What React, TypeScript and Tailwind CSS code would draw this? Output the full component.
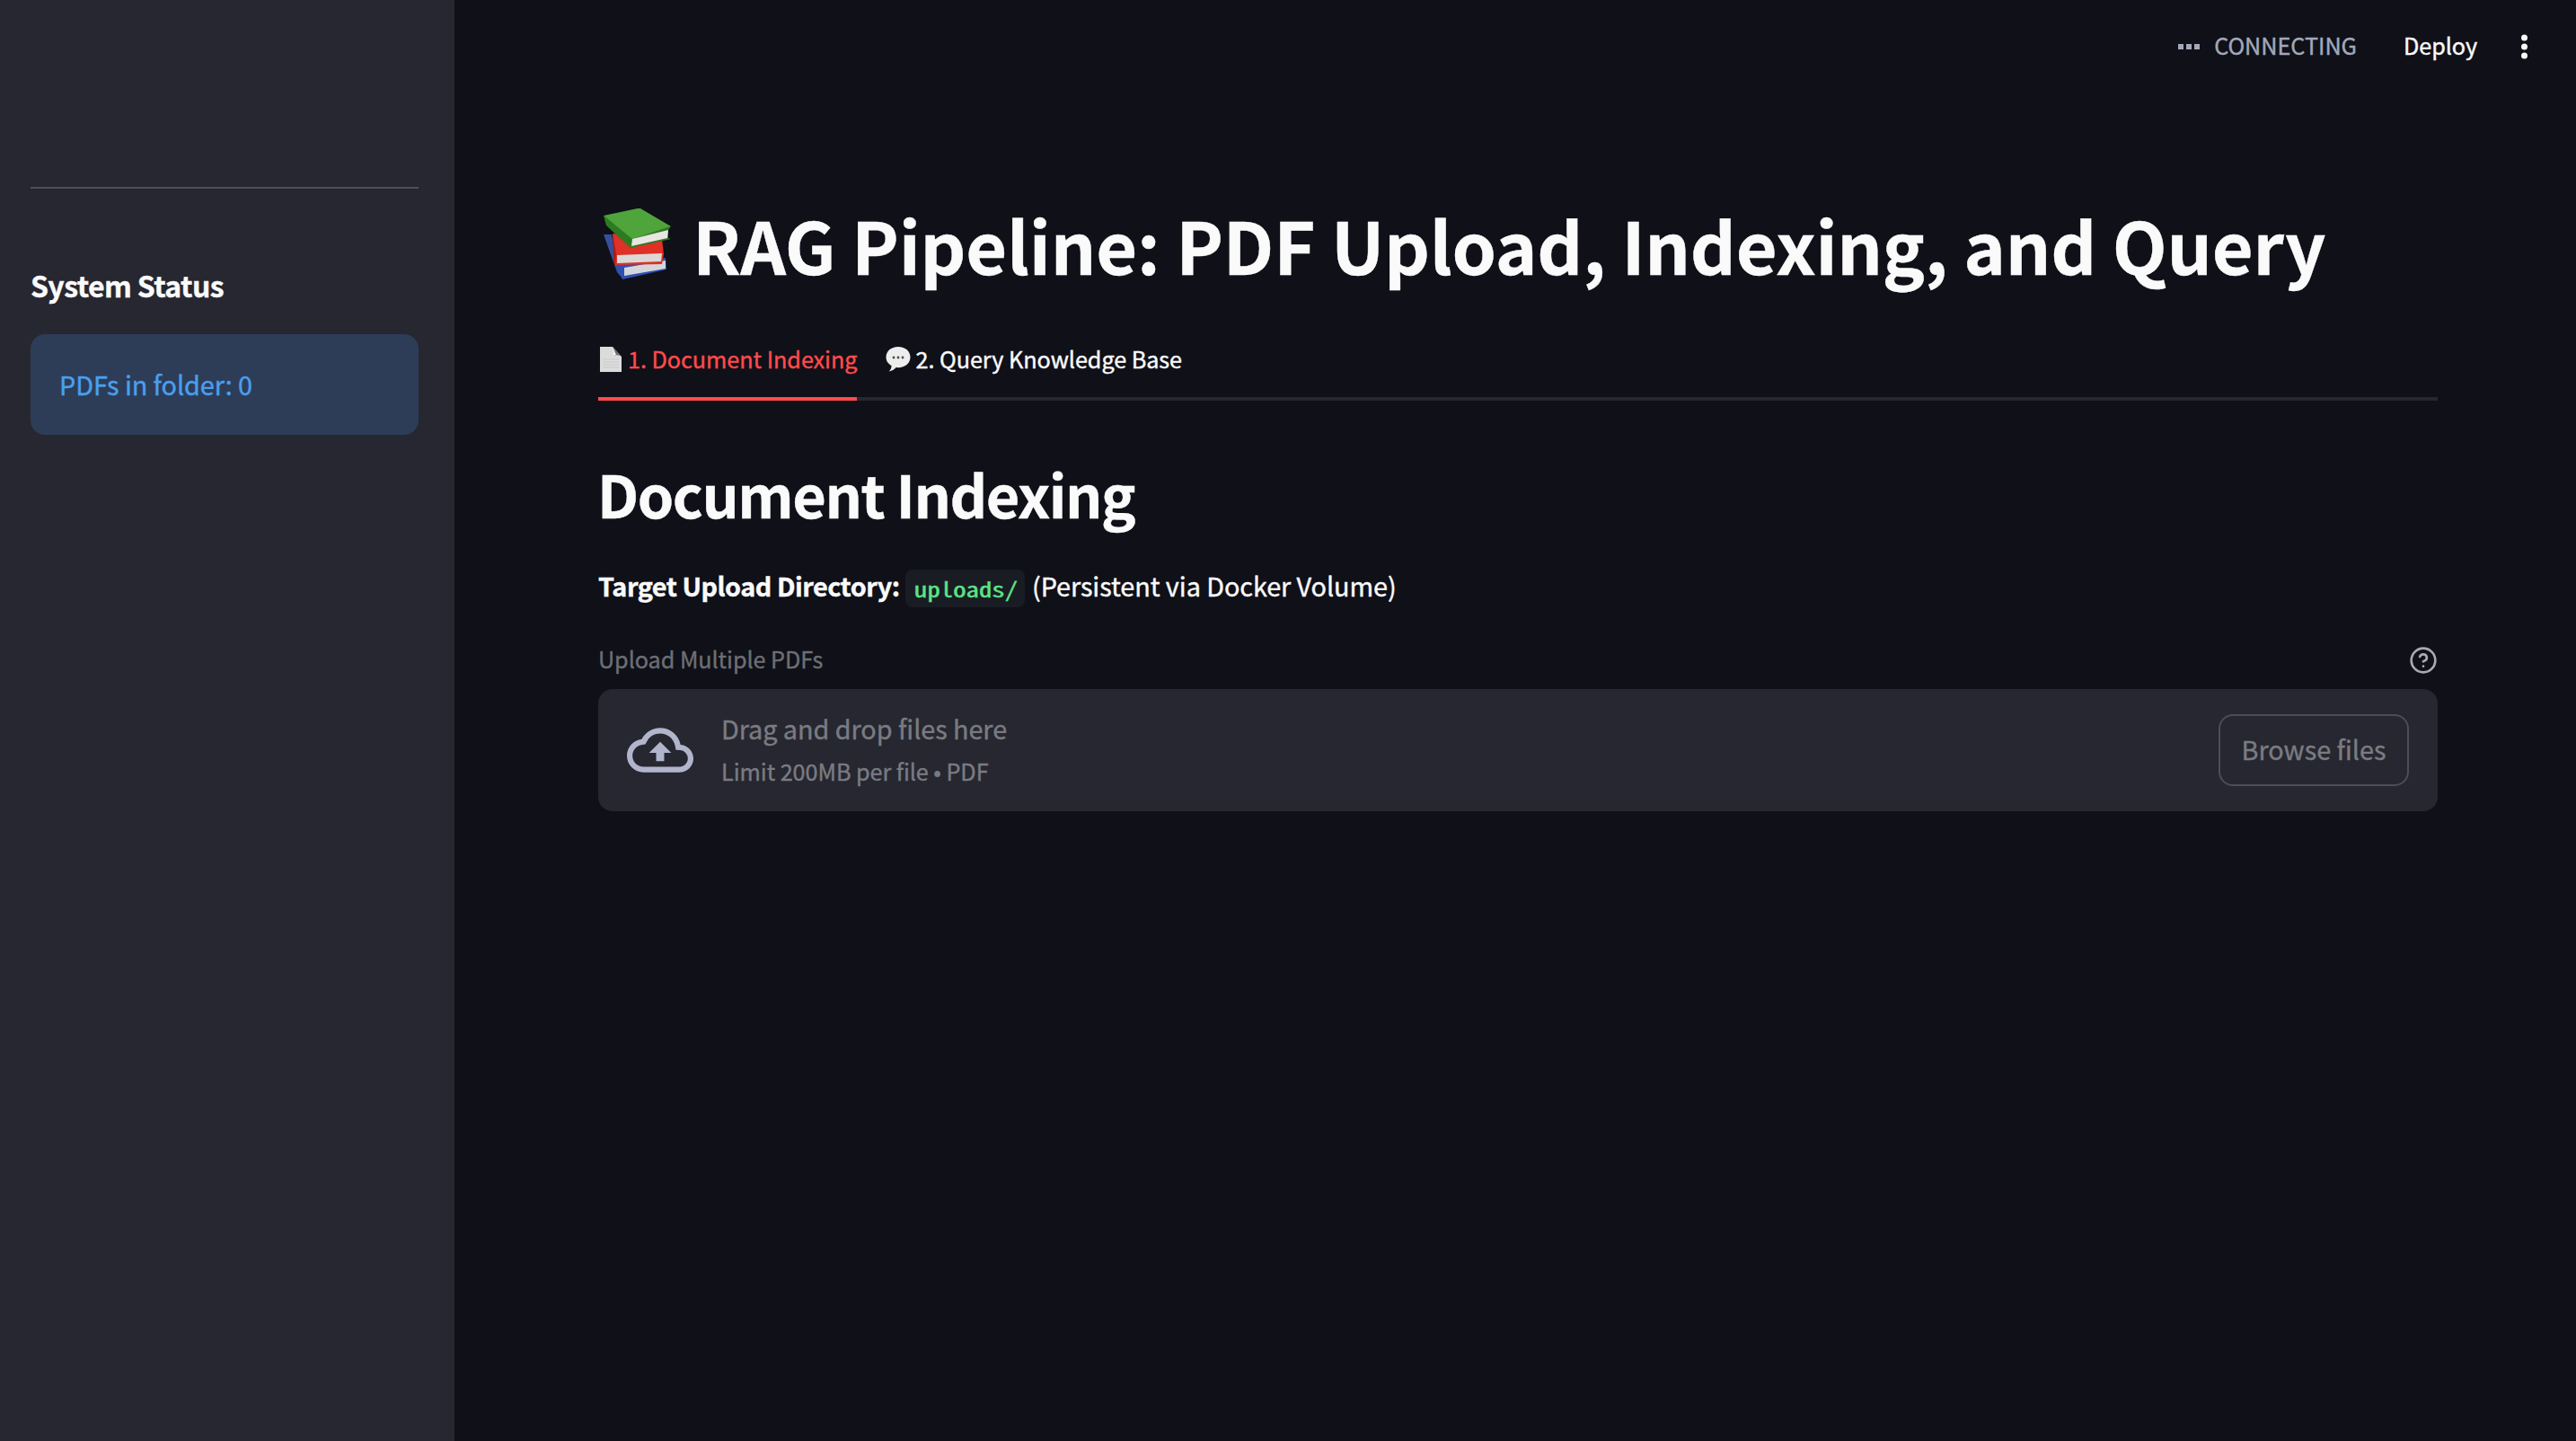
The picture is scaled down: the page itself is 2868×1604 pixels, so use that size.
import type { ReactNode } from 'react';

const sans = "font-['Noto_Sans_CJK_JP','Noto_Sans_CJK_SC',sans-serif]";

function BooksIcon() {
  return (
    <svg width="76" height="80" viewBox="0 0 76 80" className="shrink-0">
      {/* blue book */}
      <path d="M0 29h9l6 34 6 15L15 71z" fill="#35509f" />
      <path d="M13 62l56-7 1 13-49 11z" fill="#2f4fb4" />
      <path d="M23 66l46-8v9l-46 8z" fill="#d4d6da" />
      {/* red book */}
      <path d="M10 28l55 6 2 17-2 11-52 1z" fill="#df3126" />
      <path d="M10 28l4 23-1 12-2-3z" fill="#a51d1a" />
      <path d="M15 52l50-2-1 9-49 2z" fill="#dcd8d6" />
      {/* green book */}
      <path d="M0 8l32 25 43-13-3 4v9l3 1-45 10L3 19z" fill="#2d7a22" />
      <path d="M0 8l38-8h3l34 20-43 14z" fill="#4fa53c" />
      <path d="M32 34l40-10-1 9-40 9z" fill="#e8e6e2" />
    </svg>
  );
}

function PageIcon() {
  return (
    <svg width="24" height="28" viewBox="0 0 24 28" className="mr-[7px] ml-0.5 shrink-0">
      <path d="M0 0h14l10 11v17H0z" fill="#dcdcdc" />
      <path d="M3 14h18M3 17h18M3 20h18M3 23h18" stroke="#cbcbcb" strokeWidth="1" />
      <path d="M14 0l10 11c-3-2-6-2-8-1 0-4 0-7-2-10z" fill="#6f6f6f" />
      <path d="M14 0c1 3 1 6 1 10l3-1z" fill="#f4f4f4" />
    </svg>
  );
}

function SpeechIcon() {
  return (
    <svg width="28" height="28" viewBox="0 0 28 28" className="mr-[5px] shrink-0">
      <path d="M14 0C6 0 .5 5 .5 11.500c0 4.500 2.500 7.500 6 9.500 0 3-1 5-3 6.500 4-.5 6.500-2.500 8-4.500 9 1 16-4 16-11.500C27.500 5 22 0 14 0z" fill="#ededed" />
      <circle cx="9" cy="12" r="1.4" fill="#4a4a4a" />
      <circle cx="14" cy="12" r="1.4" fill="#4a4a4a" />
      <circle cx="19" cy="12" r="1.4" fill="#4a4a4a" />
    </svg>
  );
}

function Sidebar() {
  return (
    <aside className="w-[506px] shrink-0 bg-[#262730] pr-10 pl-[34px]">
      <hr className="mt-[208px] border-t-2 border-[#4d4e56]" />
      <h3 className="mt-[86px] text-[32px] leading-[42px] font-semibold tracking-[-0.6px]">System Status</h3>
      <div className="mt-[34px] flex h-28 items-center rounded-2xl bg-[#2d3d58] px-8 text-[28.8px] leading-[48px] tracking-[-0.07px] text-[#4a9fee]">
        PDFs in folder: 0
      </div>
    </aside>
  );
}

function Header() {
  return (
    <header className="flex h-[104px] items-center justify-end pr-[54px] text-[25.2px]">
      <div className="mr-4 flex gap-[3px]">
        <span className="size-1.5 bg-[#a3a8b8]" />
        <span className="size-1.5 bg-[#a3a8b8]" />
        <span className="size-1.5 bg-[#a3a8b8]" />
      </div>
      <span className="mr-[52px] pb-[3px] text-[#a3a8b8]">CONNECTING</span>
      <span className="mr-[49px] pb-[3px] tracking-[-0.05px]">Deploy</span>
      <svg width="7" height="28" viewBox="0 0 7 28" fill="#fafafa">
        <circle cx="3.5" cy="4" r="3.5" />
        <circle cx="3.5" cy="14" r="3.5" />
        <circle cx="3.5" cy="24" r="3.5" />
      </svg>
    </header>
  );
}

function Tab({ active, icon, children }: { active?: boolean; icon: ReactNode; children: ReactNode }) {
  return (
    <div
      className={
        active
          ? '-mb-1 flex h-20 items-center border-b-4 border-[#ff4b4b] pb-2 text-[#ff4b4b]'
          : '-mb-1 flex h-20 items-center border-b-4 border-transparent pb-2'
      }
    >
      {icon}
      <span>{children}</span>
    </div>
  );
}

function Uploader() {
  return (
    <section>
      <div className="mt-9 flex h-10 items-center justify-between text-[25.2px]">
        <span className="pt-0.5 tracking-[-0.05px] text-[#6d6e74]">Upload Multiple PDFs</span>
        <svg
          width="32"
          height="32"
          viewBox="0 0 24 24"
          fill="none"
          stroke="#a9aaae"
          strokeWidth="2"
          strokeLinecap="round"
          strokeLinejoin="round"
          className="mt-1"
        >
          <circle cx="12" cy="12" r="10" />
          <path d="M9.09 9a3 3 0 0 1 5.83 1c0 2-3 3-3 3" />
          <path d="M12 17h.01" />
        </svg>
      </div>
      <div className="mt-3.5 flex h-[136px] items-center rounded-2xl bg-[#262730] px-8">
        <svg width="74" height="74" viewBox="0 0 24 24" fill="#b1b5cc" className="mr-[31px]">
          <path d="M19.35 10.04A7.49 7.49 0 0 0 12 4C9.11 4 6.6 5.64 5.35 8.04A5.994 5.994 0 0 0 0 14c0 3.31 2.69 6 6 6h13c2.76 0 5-2.24 5-5 0-2.64-2.05-4.78-4.65-4.96zM19 18H6c-2.21 0-4-1.79-4-4 0-2.05 1.53-3.76 3.56-3.97l1.07-.11.5-.95A5.469 5.469 0 0 1 12 6c2.62 0 4.88 1.86 5.39 4.43l.3 1.5 1.53.11A2.98 2.98 0 0 1 22 15c0 1.65-1.35 3-3 3zM8 13h2.55v3h2.9v-3H16l-4-4z" />
        </svg>
        <div className="flex flex-1 flex-col tracking-[-0.05px] text-[#7a7b82]">
          <span className="text-[28.8px] leading-[46px]">Drag and drop files here</span>
          <span className="text-[25.2px] leading-[48px]">Limit 200MB per file • PDF</span>
        </div>
        <button className="h-20 w-[212px] rounded-2xl border-2 border-[#4c4d55] pb-px text-[28.8px] leading-none text-[#7a7b82]">
          Browse files
        </button>
      </div>
    </section>
  );
}

export default function App() {
  return (
    <div
      className={`flex h-[1604px] w-[2868px] overflow-hidden bg-[#0f1018] text-[#fafafa] [-webkit-text-stroke-width:0.4px] ${sans}`}
    >
      <Sidebar />
      <div className="flex-1">
        <Header />
        <main className="ml-40 w-[2048px]">
          <h1 className="mt-[115px] flex h-[106px] items-center text-[79.2px] leading-[106px] font-bold tracking-[-0.22px] whitespace-nowrap">
            <span className="mr-[23px] ml-1.5">
              <BooksIcon />
            </span>
            RAG Pipeline: PDF Upload, Indexing, and Query
          </h1>
          <div className="mt-[41px] flex gap-8 border-b-4 border-[#262730] text-[25.2px] tracking-[-0.04px]">
            <Tab active icon={<PageIcon />}>
              1. Document Indexing
            </Tab>
            <Tab icon={<SpeechIcon />}>2. Query Knowledge Base</Tab>
          </div>
          <h2 className="mt-[60px] -ml-px text-[64.8px] leading-[86px] font-semibold tracking-[-1.48px]">Document Indexing</h2>
          <p className="mt-[34px] flex h-[51px] items-baseline text-[28.8px] leading-[51px] tracking-[-0.07px] whitespace-nowrap">
            <strong className="w-[342px] font-bold tracking-[-0.48px]">Target Upload Directory:</strong>
            <code className="mr-2 h-[42px] w-[133px] translate-y-px rounded-lg bg-[#1a1c24] pl-[10px] font-['Noto_Sans_Mono_CJK_JP','DejaVu_Sans_Mono',monospace] text-[23px] leading-[42px] tracking-normal text-[#5ce488]">
              <span className="inline-block origin-left scale-x-125">uploads/</span>
            </code>
            (Persistent via Docker Volume)
          </p>
          <Uploader />
        </main>
      </div>
    </div>
  );
}
